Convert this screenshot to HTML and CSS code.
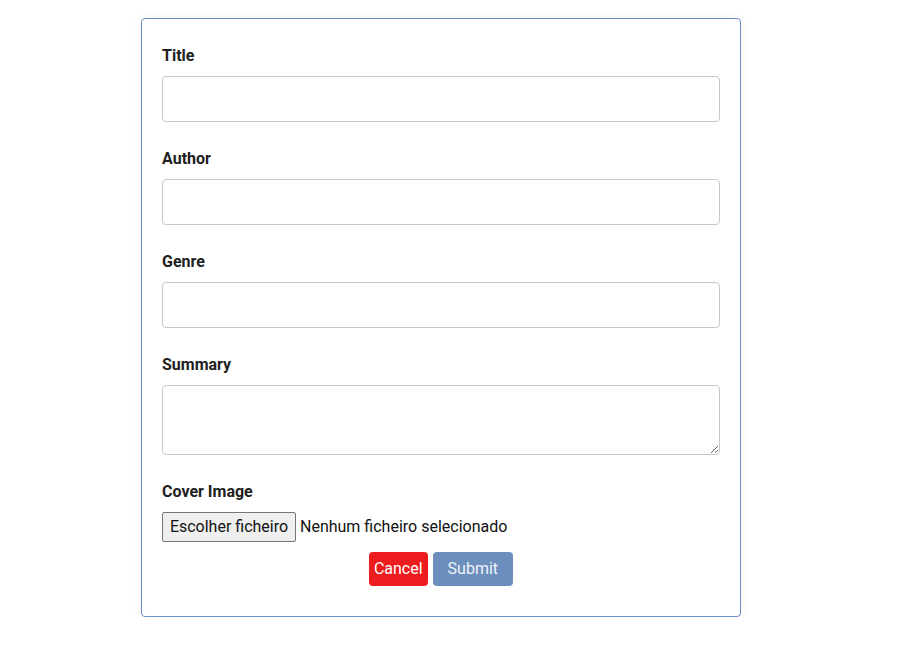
FILE: index.html
```html
<!DOCTYPE html>
<html>
<head>
<meta charset="utf-8">
<link rel="stylesheet" href="styles.css">
</head>
<body>
<form class="card">
  <div class="group">
    <label class="label">Title</label>
    <input class="input" type="text">
  </div>
  <div class="group">
    <label class="label">Author</label>
    <input class="input" type="text">
  </div>
  <div class="group">
    <label class="label">Genre</label>
    <input class="input" type="text">
  </div>
  <div class="group">
    <label class="label">Summary</label>
    <textarea class="textarea"></textarea>
  </div>
  <div class="group last">
    <label class="label">Cover Image</label>
    <div class="file">
      <span class="file-btn">Escolher ficheiro</span>
      <span class="file-text">Nenhum ficheiro selecionado</span>
    </div>
  </div>
  <div class="actions">
    <button type="button" class="btn cancel">Cancel</button>
    <button type="button" class="btn submit">Submit</button>
  </div>
</form>
</body>
</html>
```
FILE: styles.css
```css
html, body {
  margin: 0;
  padding: 0;
  background: #ffffff;
}
body {
  font-family: Roboto, "Liberation Sans", sans-serif;
  color: #212529;
  padding: 18px 0 0 141px;
}
.card {
  box-sizing: border-box;
  width: 600px;
  border: 1px solid #6b90c6;
  border-radius: 4px;
  box-shadow: 0 0 12px rgba(0, 0, 0, 0.06);
  padding: 25px 20px 30px 20px;
  background: #fff;
}
.group {
  display: flex;
  flex-direction: column;
  margin-bottom: 25px;
}
.group.last {
  margin-bottom: 10px;
}
.label {
  font-weight: 700;
  font-size: 16px;
  line-height: 24px;
  margin-bottom: 8px;
  color: #212121;
}
.input, .textarea {
  box-sizing: border-box;
  width: 558px;
  border: 1px solid #c8c8c8;
  border-radius: 4px;
  background: #fff;
  font-family: inherit;
  margin: 0;
}
.input {
  height: 46px;
}
.textarea {
  height: 70px;
  resize: vertical;
  display: block;
}
.file {
  display: flex;
  align-items: center;
  height: 30px;
  font-size: 16px;
  line-height: 18px;
}
.file-btn {
  box-sizing: border-box;
  height: 30px;
  width: 134px;
  display: flex;
  align-items: center;
  justify-content: center;
  padding-bottom: 1px;
  background: #efefef;
  border: 1px solid #767676;
  border-radius: 2px;
  color: #111;
}
.file-text {
  margin-left: 4px;
  padding-bottom: 1px;
  color: #111;
}
.actions {
  display: flex;
  justify-content: center;
  gap: 5px;
}
.btn {
  height: 34px;
  border: none;
  border-radius: 4px;
  font-family: inherit;
  font-size: 16px;
  color: #fff;
  padding-bottom: 2px;
  cursor: pointer;
}
.cancel {
  background: #ec1c1f;
  padding-left: 5px;
  padding-right: 5px;
}
.submit {
  background: #6c8fbe;
  padding-left: 15px;
  padding-right: 15px;
  color: #eef2f8;
}
```
